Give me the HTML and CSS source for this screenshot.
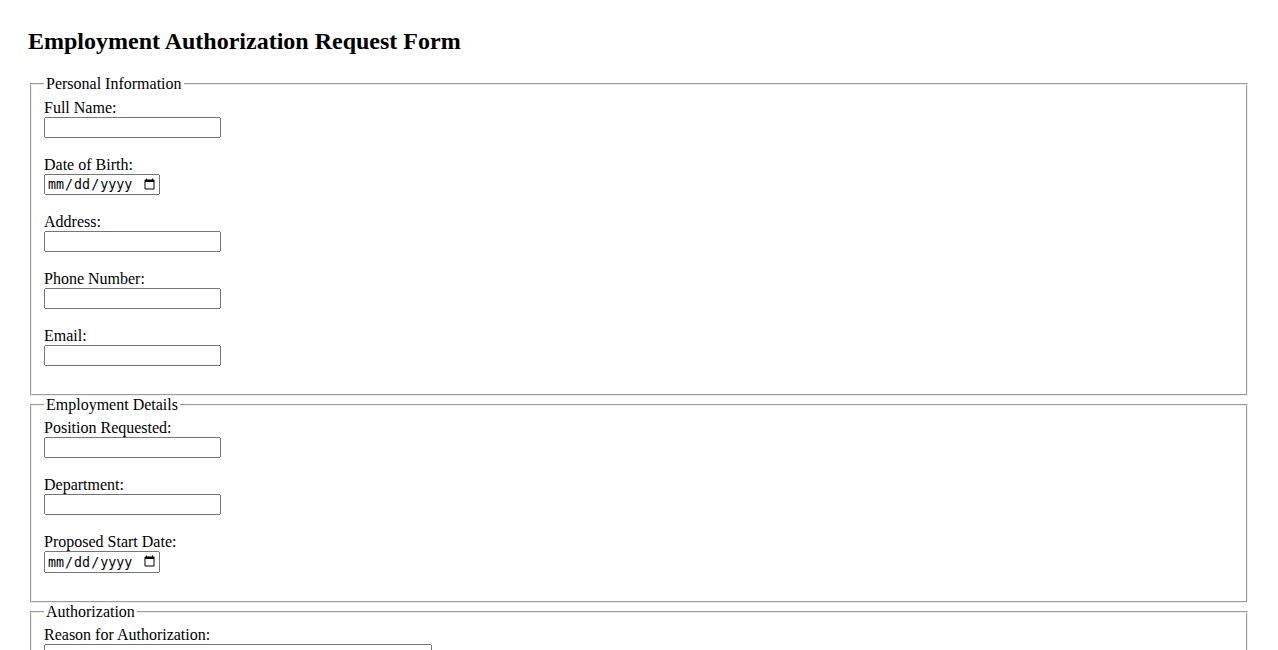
FILE: index.html
```html
<!DOCTYPE html>
<html lang="en">
<head>
    <meta charset="UTF-8">
    <meta name="viewport" content="width=device-width, initial-scale=1.0">
    <title>Employment Authorization Request Form</title>
    <link rel="stylesheet" href="styles.css">
</head>
<body>
    <h2>Employment Authorization Request Form</h2>
    <form class="auth-form">
        <fieldset>
            <legend>Personal Information</legend>
            <label for="full-name">Full Name:</label><br>
            <input type="text" id="full-name" name="full-name" required><br><br>

            <label for="dob">Date of Birth:</label><br>
            <input type="date" id="dob" name="dob" required><br><br>

            <label for="address">Address:</label><br>
            <input type="text" id="address" name="address" required><br><br>

            <label for="phone">Phone Number:</label><br>
            <input type="tel" id="phone" name="phone" required><br><br>

            <label for="email">Email:</label><br>
            <input type="email" id="email" name="email" required><br><br>
        </fieldset>

        <fieldset>
            <legend>Employment Details</legend>
            <label for="position">Position Requested:</label><br>
            <input type="text" id="position" name="position" required><br><br>

            <label for="department">Department:</label><br>
            <input type="text" id="department" name="department" required><br><br>

            <label for="start-date">Proposed Start Date:</label><br>
            <input type="date" id="start-date" name="start-date" required><br><br>
        </fieldset>

        <fieldset>
            <legend>Authorization</legend>
            <label for="reason">Reason for Authorization:</label><br>
            <textarea id="reason" name="reason" rows="4" cols="50" required></textarea><br><br>

            <label for="supervisor">Supervisor Name:</label><br>
            <input type="text" id="supervisor" name="supervisor" required><br><br>
        </fieldset>

        <input type="submit" value="Submit Request">
    </form>
</body>
</html>
```

FILE: styles.css
```css
body {
    font-family: "Liberation Serif", "Times New Roman", serif;
    margin: 28px;
}

h2 {
    margin-top: 0;
}

input[type="text"],
input[type="tel"],
input[type="email"] {
    width: 177px;
    box-sizing: border-box;
}

input[type="date"] {
    width: 116px;
    box-sizing: border-box;
}

textarea {
    width: 388px;
    box-sizing: border-box;
}
```
